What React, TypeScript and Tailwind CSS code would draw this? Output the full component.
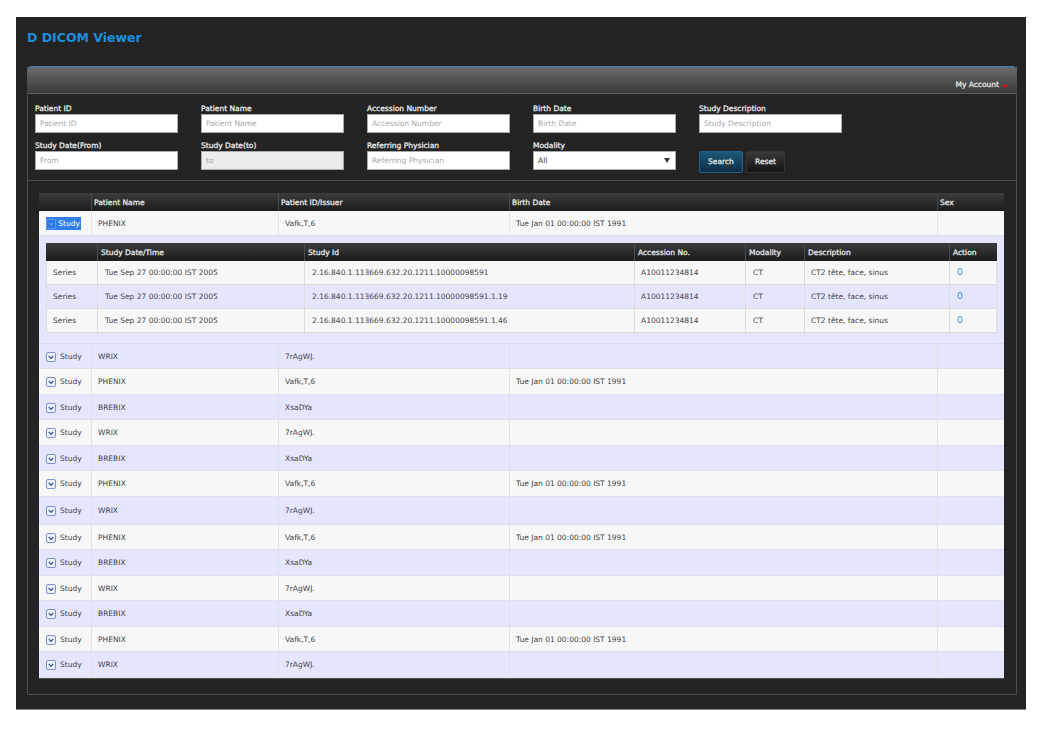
const FONT = "font-['DejaVu_Sans',sans-serif]";
const LBL = "[-webkit-text-stroke:0.25px_currentColor]";
const BLUE = "bg-[#e4e5ff] bg-[conic-gradient(#e1e2ff_25%,#e8e9ff_0_50%,#e1e2ff_0_75%,#e8e9ff_0)] bg-[length:2px_2px]";
const DARK = "bg-[#232323] bg-[conic-gradient(#202020_25%,#272727_0_50%,#202020_0_75%,#272727_0)] bg-[length:2px_2px]";

const topFields = [
  ["Patient ID", "Patient ID"],
  ["Patient Name", "Patient Name"],
  ["Accession Number", "Accession Number"],
  ["Birth Date", "Birth Date"],
  ["Study Description", "Study Description"],
];

const bottomFields = [
  ["Study Date(From)", "From", false],
  ["Study Date(to)", "to", true],
  ["Referring Physician", "Referring Physician", false],
] as const;

const PH = ["PHENIX", "Vafk,T,6", "Tue Jan 01 00:00:00 IST 1991"];
const WR = ["WRIX", "7rAgWJ.", ""];
const BR = ["BREBIX", "XsaDYa", ""];

const rows = [
  { d: WR, h: "h-[25px]" },
  { d: PH, h: "h-[26px]" },
  { d: BR, h: "h-[25px]" },
  { d: WR, h: "h-[26px]" },
  { d: BR, h: "h-[25px]" },
  { d: PH, h: "h-[26px]" },
  { d: WR, h: "h-[28px]" },
  { d: PH, h: "h-[25px]" },
  { d: BR, h: "h-[26px]" },
  { d: WR, h: "h-[25px]" },
  { d: BR, h: "h-[26px]" },
  { d: PH, h: "h-[25px]" },
  { d: WR, h: "h-[26px]" },
];

const seriesIds = [
  "2.16.840.1.113669.632.20.1211.10000098591",
  "2.16.840.1.113669.632.20.1211.10000098591.1.19",
  "2.16.840.1.113669.632.20.1211.10000098591.1.46",
];

function Chevron({ active }: { active?: boolean }) {
  return (
    <svg width="10" height="10" viewBox="0 0 10 10" className="shrink-0">
      <rect
        x="0.5"
        y="0.5"
        width="9"
        height="9"
        rx="1.5"
        fill={active ? "#2a78e4" : "#eef1ff"}
        stroke={active ? "#5b9cf0" : "#7d90d0"}
      />
      <path d="M2.8 4 L5 6.3 L7.2 4" fill="none" stroke={active ? "#5b9cf0" : "#34508f"} strokeWidth="1.2" />
    </svg>
  );
}

function Field({ label, placeholder, disabled }: { label: string; placeholder: string; disabled?: boolean }) {
  return (
    <div className="w-[166px] shrink-0">
      <div className={`text-[7.5px] leading-[10px] text-[#f0f0f0] h-[10px] ${LBL}`}>{label}</div>
      <div
        className={`w-[143px] h-[19px] border border-[#aaaaaa] flex items-center pl-[4px] text-[7.5px] text-[#a8a8a8] ${
          disabled ? "bg-[#ececec]" : "bg-white"
        }`}
      >
        {placeholder}
      </div>
    </div>
  );
}

export default function App() {
  return (
    <div className={`w-[1040px] h-[736px] bg-white pt-[17px] pl-[16px] overflow-hidden ${FONT}`}>
      <div className={`w-[1010px] h-[693px] pt-[12px] pl-[11px] border-b border-[#8a7f8a] ${DARK}`}>
        <div className="h-[37px] text-[12.5px] leading-[18px] font-bold text-[#1b8fdc]">D DICOM Viewer</div>
        <div className="w-[990px] h-[629px] border border-t-0 border-[#4c4c4c] flex flex-col">
          <div className="h-[28px] -mx-px rounded-t-[5px] border-t border-[#3f7fae] border-b border-b-[#5a5a5a] bg-gradient-to-b from-[#6b6b6b] to-[#3b3b3b] flex items-end justify-end pr-[9px] pb-[3px]">
            <span className={`text-[7.5px] leading-[10px] text-[#e8e8e8] ${LBL}`}>My Account</span>
            <span className="ml-[3px] mb-[2px] w-0 h-0 border-x-[3px] border-x-transparent border-t-[3px] border-t-[#e01010]" />
          </div>
          <div className="h-[87px] border-b border-[#4c4650] pl-[7px] pt-[10px]">
            <div className="flex">
              {topFields.map(([l, p]) => (
                <Field key={l} label={l} placeholder={p} />
              ))}
            </div>
            <div className="flex mt-[8px]">
              {bottomFields.map(([l, p, d]) => (
                <Field key={l} label={l} placeholder={p} disabled={d} />
              ))}
              <div className="w-[166px] shrink-0">
                <div className={`text-[7.5px] leading-[10px] text-[#f0f0f0] h-[10px] ${LBL}`}>Modality</div>
                <div className="w-[143px] h-[19px] border border-[#aaaaaa] bg-white flex items-center justify-between pl-[4px] pr-[5px] text-[7.5px] text-[#333333]">
                  <span>All</span>
                  <span className="w-0 h-0 border-x-[3px] border-x-transparent border-t-[5px] border-t-[#333333]" />
                </div>
              </div>
              <div className="flex gap-[3px] mt-[5px] items-start">
                <button className={`w-[44px] h-[22px] mt-[5px] rounded-[2px] border border-[#1f5f8a] bg-gradient-to-b from-[#1d5878] to-[#0f2f45] text-[7.5px] text-[#e8e8e8] ${LBL}`}>
                  Search
                </button>
                <button className={`w-[39px] h-[22px] mt-[5px] rounded-[2px] border border-[#333333] bg-gradient-to-b from-[#3a3a3a] to-[#151515] text-[7.5px] text-[#e8e8e8] ${LBL}`}>
                  Reset
                </button>
              </div>
            </div>
          </div>

          <div className="mt-[12px] ml-[11px] w-[965px] flex flex-col border-b border-[#555555]">
            <div className={`grid grid-cols-[53px_187px_231px_428px_66px] h-[18px] bg-gradient-to-b from-[#3c3c3c] to-[#1c1c1c] text-[7.5px] text-[#ececec] ${LBL}`}>
              {["", "Patient Name", "Patient ID/Issuer", "Birth Date", "Sex"].map((t, i) => (
                <div key={i} className={`pl-[2px] pt-[1px] flex items-center ${i < 4 ? "border-r border-[#4a4a4a]" : ""}`}>
                  {t}
                </div>
              ))}
            </div>
            <div className="grid grid-cols-[53px_187px_231px_428px_66px] h-[25px] bg-[#f7f7f7] text-[7.5px] text-[#444444] border-b border-[#dfe0ee]">
              <div className="border-r border-[#e6e6e6] flex items-center pl-[7px] pt-[1px]">
                <span className="w-[35px] h-[13px] bg-[#2f7fe8] text-white flex items-center justify-between pr-[1px]">
                  <Chevron active />
                  <span>Study</span>
                </span>
              </div>
              <div className="border-r border-[#e6e6e6] flex items-center pl-[6px] pt-[1px]">PHENIX</div>
              <div className="border-r border-[#e6e6e6] flex items-center pl-[6px] pt-[1px]">Vafk,T,6</div>
              <div className="border-r border-[#e6e6e6] flex items-center pl-[6px] pt-[1px]">Tue Jan 01 00:00:00 IST 1991</div>
              <div />
            </div>

            <div className={`h-[108px] pt-[7px] px-[7px] border-b border-[#d8d8e8] ${BLUE}`}>
              <div className={`grid grid-cols-[52px_207px_330px_111px_59px_145px_47px] h-[18px] bg-gradient-to-b from-[#3c3c3c] to-[#1c1c1c] text-[7.5px] text-[#ececec] ${LBL}`}>
                {["", "Study Date/Time", "Study Id", "Accession No.", "Modality", "Description", "Action"].map((t, i) => (
                  <div key={i} className={`pl-[3px] pt-[1px] flex items-center ${i < 6 ? "border-r border-[#4a4a4a]" : ""}`}>
                    {t}
                  </div>
                ))}
              </div>
              {seriesIds.map((id, i) => (
                <div
                  key={id}
                  className={`grid grid-cols-[52px_207px_330px_111px_59px_145px_47px] h-[24px] text-[7.5px] text-[#444444] border-b border-[#dcdcdc] ${
                    i % 2 ? BLUE : "bg-[#f7f7f7]"
                  }`}
                >
                  <div className="border-l border-r border-[#dcdcdc] flex items-center pl-[6px]">Series</div>
                  <div className="border-r border-[#dcdcdc] flex items-center pl-[7px]">Tue Sep 27 00:00:00 IST 2005</div>
                  <div className="border-r border-[#dcdcdc] flex items-center pl-[7px]">{id}</div>
                  <div className="border-r border-[#dcdcdc] flex items-center pl-[6px]">A10011234814</div>
                  <div className="border-r border-[#dcdcdc] flex items-center pl-[7px]">CT</div>
                  <div className="border-r border-[#dcdcdc] flex items-center pl-[6px]">CT2 tête, face, sinus</div>
                  <div className="border-r border-[#dcdcdc] flex items-center pl-[7px] text-[9px] text-[#2a9ae0]">0</div>
                </div>
              ))}
            </div>

            {rows.map((r, i) => (
              <div
                key={i}
                className={`grid grid-cols-[53px_187px_231px_428px_66px] text-[7.5px] text-[#444444] border-b border-[#e0e0e8] ${r.h} ${
                  i % 2 ? "bg-[#f7f7f7]" : BLUE
                }`}
              >
                <div className="border-r border-[#e0e0e8] flex items-center pl-[7px] pt-[1px] gap-[4px]">
                  <Chevron />
                  <span>Study</span>
                </div>
                <div className="border-r border-[#e0e0e8] flex items-center pl-[6px] pt-[1px]">{r.d[0]}</div>
                <div className="border-r border-[#e0e0e8] flex items-center pl-[6px] pt-[1px]">{r.d[1]}</div>
                <div className="border-r border-[#e0e0e8] flex items-center pl-[6px] pt-[1px]">{r.d[2]}</div>
                <div />
              </div>
            ))}
          </div>
        </div>
      </div>
    </div>
  );
}
